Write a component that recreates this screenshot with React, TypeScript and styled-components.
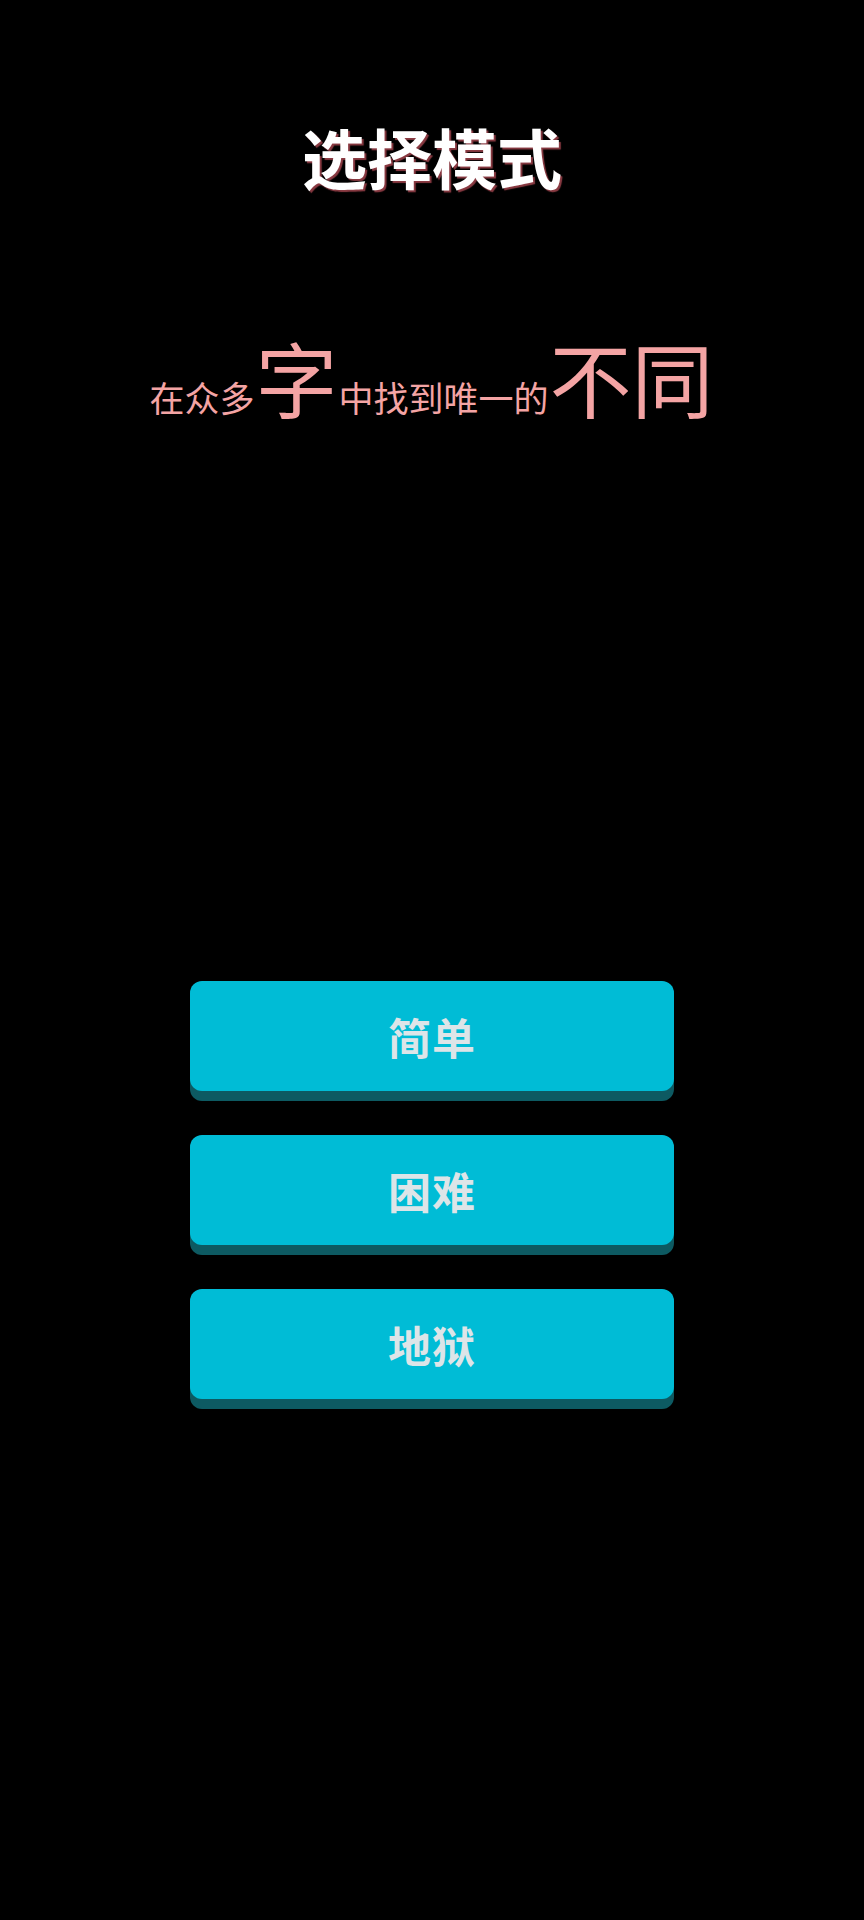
import React from 'react';
import styled, { createGlobalStyle } from 'styled-components';

const GlobalStyle = createGlobalStyle`
html, body {
    margin: 0;
    padding: 0;
    background: #000;
}
body {
    font-family: "Noto Sans CJK SC", "Noto Sans", sans-serif;
}
`;

const Page = styled.div`
min-height: 1920px;
display: flex;
flex-direction: column;
align-items: center;
background: #000;
padding-top: 116px;
box-sizing: border-box;
`;

const Title = styled.h1`
margin: 0;
font-size: 65px;
line-height: 80px;
font-weight: 700;
color: #fff;
text-shadow: 2px 2px 1px #8a3a42;
`;

const Slogan = styled.div`
margin-top: 136px;
display: flex;
align-items: baseline;
color: #f4a4a4;
font-size: 35px;
line-height: 90px;
`;

const Big = styled.span`
font-size: 82px;
margin: 0 1px;
`;

const Modes = styled.div`
margin-top: 539px;
display: flex;
flex-direction: column;
gap: 44px;
`;

const ModeButton = styled.button`
width: 484px;
height: 110px;
border: none;
border-radius: 12px;
background: #00bcd6;
box-shadow: 0 10px 0 #0d5a62;
color: #dde5e8;
font-family: "Noto Sans CJK SC", "Noto Sans", sans-serif;
font-size: 43px;
font-weight: 700;
letter-spacing: 1px;
cursor: pointer;
`;

const modes = ['简单', '困难', '地狱'];

export default function App() {
    return (
        <>
            <GlobalStyle />
            <Page>
                <Title>选择模式</Title>
                <Slogan>
                    在众多<Big>字</Big>中找到唯一的<Big>不同</Big>
                </Slogan>
                <Modes>
                    {modes.map(m => <ModeButton key={m}>{m}</ModeButton>)}
                </Modes>
            </Page>
        </>
    );
}
